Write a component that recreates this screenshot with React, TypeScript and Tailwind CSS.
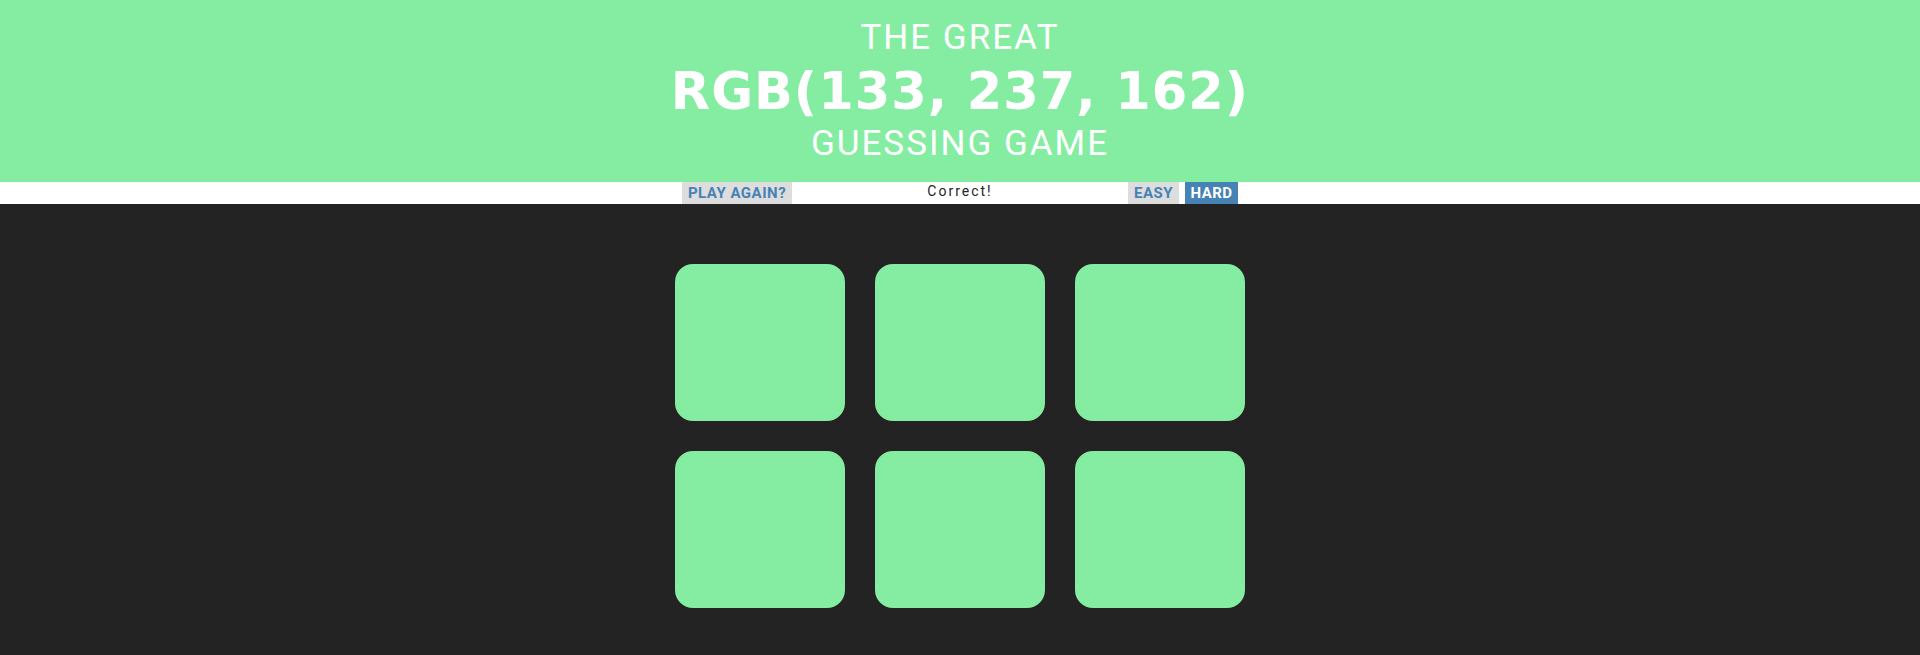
export default function App() {
  const squares = [0, 1, 2, 3, 4, 5]

  return (
    <div className="min-h-screen bg-[#232323] font-['Roboto',sans-serif]">
      {/* Header */}
      <div className="h-[182px] bg-[#85eda2] text-white text-center pt-[20px]">
        <div className="text-[35px] leading-[35px] tracking-[2px] font-normal">THE GREAT</div>
        <div className="mt-[11px] text-[51px] leading-[51px] font-bold tracking-[1px] font-['DejaVu_Sans',sans-serif]">
          RGB(133, 237, 162)
        </div>
        <div className="mt-[9px] text-[35px] leading-[35px] tracking-[2px] font-normal">GUESSING GAME</div>
      </div>

      {/* Stripe */}
      <div className="h-[22px] bg-white flex justify-center">
        <div className="w-[556px] flex items-stretch">
          <button className="w-[110px] h-[22px] bg-[#dddddd] text-[#4682b4] text-[15px] leading-[22px] font-bold tracking-[0.5px] uppercase">
            Play Again?
          </button>
          <span className="flex-1 text-center text-[14px] leading-[18px] tracking-[2px] text-[#232323]">Correct!</span>
          <button className="w-[51px] h-[22px] bg-[#dddddd] text-[#4682b4] text-[15px] leading-[22px] font-bold tracking-[0.5px] uppercase">
            Easy
          </button>
          <button className="ml-[6px] w-[53px] h-[22px] bg-[#4682b4] text-white text-[15px] leading-[22px] font-bold tracking-[0.5px] uppercase">
            Hard
          </button>
        </div>
      </div>

      {/* Squares */}
      <div className="pt-[60px] flex justify-center">
        <div className="grid grid-cols-[170px_170px_170px] auto-rows-[157px] gap-[30px]">
          {squares.map((i) => (
            <div key={i} className="rounded-[18px] bg-[#85eda2]" />
          ))}
        </div>
      </div>
    </div>
  )
}
